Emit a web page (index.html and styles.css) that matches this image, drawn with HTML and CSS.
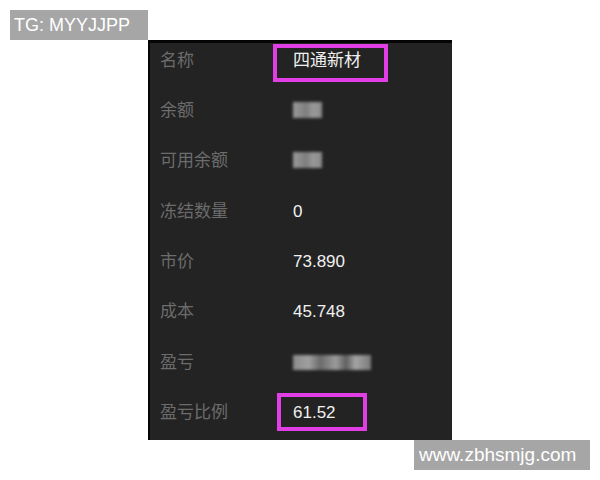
FILE: index.html
```html
<!DOCTYPE html>
<html lang="zh-CN">
<head>
<meta charset="utf-8">
<link rel="stylesheet" href="styles.css">
</head>
<body>
<div class="page">
  <div class="tag tag-top">TG: MYYJJPP</div>
  <div class="panel">
    <div class="row"><span class="label">名称</span><span class="value boxed box-name">四通新材</span></div>
    <div class="row"><span class="label">余额</span><span class="blur blur-short"></span></div>
    <div class="row"><span class="label">可用余额</span><span class="blur blur-short"></span></div>
    <div class="row"><span class="label">冻结数量</span><span class="value">0</span></div>
    <div class="row"><span class="label">市价</span><span class="value">73.890</span></div>
    <div class="row"><span class="label">成本</span><span class="value">45.748</span></div>
    <div class="row"><span class="label">盈亏</span><span class="blur blur-long"></span></div>
    <div class="row"><span class="label">盈亏比例</span><span class="value boxed box-ratio">61.52</span></div>
  </div>
  <div class="tag tag-bottom">www.zbhsmjg.com</div>
</div>
</body>
</html>
```
FILE: styles.css
```css
html, body {
  margin: 0;
  padding: 0;
  background: #ffffff;
}
.page {
  display: flex;
  flex-direction: column;
  width: 600px;
  height: 480px;
  padding-top: 10px;
  box-sizing: border-box;
}
.tag {
  background: #a6a6a6;
  color: #ffffff;
  font-family: "Liberation Sans", Arial, sans-serif;
  display: flex;
  align-items: center;
  box-sizing: border-box;
  height: 30px;
}
.tag-top {
  margin-left: 10px;
  width: 138px;
  font-size: 18px;
  padding-left: 4px;
}
.tag-bottom {
  margin-left: 414px;
  width: 176px;
  font-size: 19px;
  padding-left: 5px;
}
.panel {
  margin-left: 148px;
  width: 304px;
  height: 400px;
  box-sizing: border-box;
  background: #232323;
  border-top: 3px solid #050505;
  border-left: 2px solid #050505;
  padding-left: 10px;
  overflow: hidden;
  display: flex;
  flex-direction: column;
}
.row {
  height: 50.4px;
  flex: none;
  box-sizing: border-box;
  padding-top: 5.5px;
  display: flex;
  align-items: flex-start;
  font-family: "Liberation Sans", "Noto Sans CJK SC", sans-serif;
  font-size: 17px;
  line-height: 24px;
}
.label {
  width: 133px;
  flex: none;
  color: #6c6c6c;
}
.value {
  color: #f0f0f0;
  position: relative;
}
.boxed::after {
  content: "";
  position: absolute;
  border: 4px solid #e23ee6;
}
.box-name::after {
  top: -4.5px;
  bottom: -9.5px;
  left: -20px;
  right: -27px;
}
.box-ratio::after {
  top: -8.3px;
  bottom: -5.7px;
  left: -16px;
  right: -31.5px;
}
.blur {
  display: block;
  margin-top: 3px;
  height: 16px;
  filter: blur(1.5px);
}
.blur-short {
  width: 29px;
  background: linear-gradient(90deg, #9a9a9a 0%, #7e7e7e 45%, #999999 70%, #8a8a8a 100%);
}
.blur-long {
  width: 78px;
  height: 15px;
  margin-top: 4px;
  background: linear-gradient(90deg, #8a8a8a 0%, #a0a0a0 20%, #6a6a6a 35%, #9c9c9c 55%, #5e5e5e 68%, #a4a4a4 80%, #7a7a7a 100%);
}
```
